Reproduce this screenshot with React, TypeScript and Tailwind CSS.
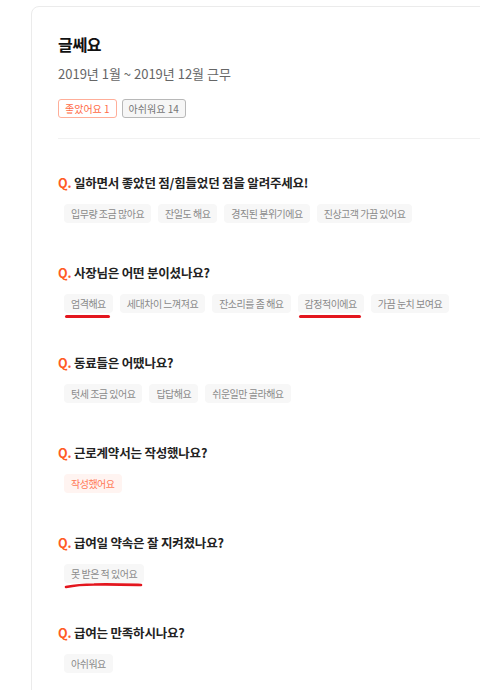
import React from "react";

type Mark = "line" | "wave" | undefined;

type Item = { text: string; mark?: Mark; good?: boolean };

const questions: { q: string; items: Item[] }[] = [
  {
    q: "일하면서 좋았던 점/힘들었던 점을 알려주세요!",
    items: [
      { text: "입무량 조금 많아요" },
      { text: "잔일도 해요" },
      { text: "경직된 분위기에요" },
      { text: "진상고객 가끔 있어요" },
    ],
  },
  {
    q: "사장님은 어떤 분이셨나요?",
    items: [
      { text: "엄격해요", mark: "line" },
      { text: "세대차이 느껴져요" },
      { text: "잔소리를 좀 해요" },
      { text: "감정적이에요", mark: "line" },
      { text: "가끔 눈치 보여요" },
    ],
  },
  {
    q: "동료들은 어땠나요?",
    items: [{ text: "텃세 조금 있어요" }, { text: "답답해요" }, { text: "쉬운일만 골라해요" }],
  },
  {
    q: "근로계약서는 작성했나요?",
    items: [{ text: "작성했어요", good: true }],
  },
  {
    q: "급여일 약속은 잘 지켜졌나요?",
    items: [{ text: "못 받은 적 있어요", mark: "wave" }],
  },
  {
    q: "급여는 만족하시나요?",
    items: [{ text: "아쉬워요" }],
  },
];

function Chip({ item }: { item: Item }) {
  return (
    <span
      className={`relative inline-flex items-center h-[19px] px-[7px] rounded-[4px] text-[10px] tracking-[-0.5px] ${
        item.good ? "bg-[#fff4f1] text-[#ff7a57]" : "bg-[#f7f7f7] text-[#8a8a8a]"
      }`}
    >
      {item.text}
      {item.mark === "line" && (
        <span className="absolute left-[1px] right-[3px] bottom-[-5px] h-[3px] rounded-full bg-[#e3161e]" />
      )}
      {item.mark === "wave" && (
        <svg
          className="absolute left-0 bottom-[-6px]"
          width="80"
          height="8"
          viewBox="0 0 80 8"
          fill="none"
        >
          <path
            d="M2 6 C 12 4, 20 3.5, 30 3.5 C 45 3, 60 3.5, 77 4"
            stroke="#e3161e"
            strokeWidth="2.6"
            strokeLinecap="round"
          />
        </svg>
      )}
    </span>
  );
}

export default function App() {
  return (
    <div
      className="w-[480px] h-[690px] overflow-hidden bg-white pl-[31px] pt-[6px]"
      style={{ fontFamily: '"Noto Sans CJK KR", "Noto Sans", sans-serif' }}
    >
      <div className="w-[520px] h-[720px] border border-[#ebebeb] rounded-tl-[8px] pl-[26px] pt-[25px]">
        <h1 className="text-[16px] leading-[24px] font-bold text-[#111] tracking-[-0.3px]">글쎄요</h1>
        <p className="mt-[8px] text-[13px] leading-[20px] text-[#666]">
          2019년 1월 ~ 2019년 12월 근무
        </p>

        <div className="flex gap-[5px] mt-[15px]">
          <span className="inline-flex items-center h-[19px] px-[6px] rounded-[3px] border border-[#ffae99] text-[10px] text-[#ff6a45]">
            좋았어요 1
          </span>
          <span className="inline-flex items-center h-[19px] px-[6px] rounded-[3px] border border-[#b8b8b8] bg-[#f6f6f6] text-[10px] text-[#777]">
            아쉬워요 14
          </span>
        </div>

        <div className="mt-[20px] h-px bg-[#f1f1f1]" />

        <div className="pt-[34px] flex flex-col gap-[40px]">
          {questions.map((sec) => (
            <div key={sec.q}>
              <h2 className="text-[12.5px] leading-[20px] font-semibold text-[#222] tracking-[-0.2px]">
                <span className="text-[#ff5a24]">Q.</span> {sec.q}
              </h2>
              <div className="mt-[11px] ml-[6px] flex flex-wrap gap-[7px]">
                {sec.items.map((it) => (
                  <Chip key={it.text} item={it} />
                ))}
              </div>
            </div>
          ))}
        </div>
      </div>
    </div>
  );
}
